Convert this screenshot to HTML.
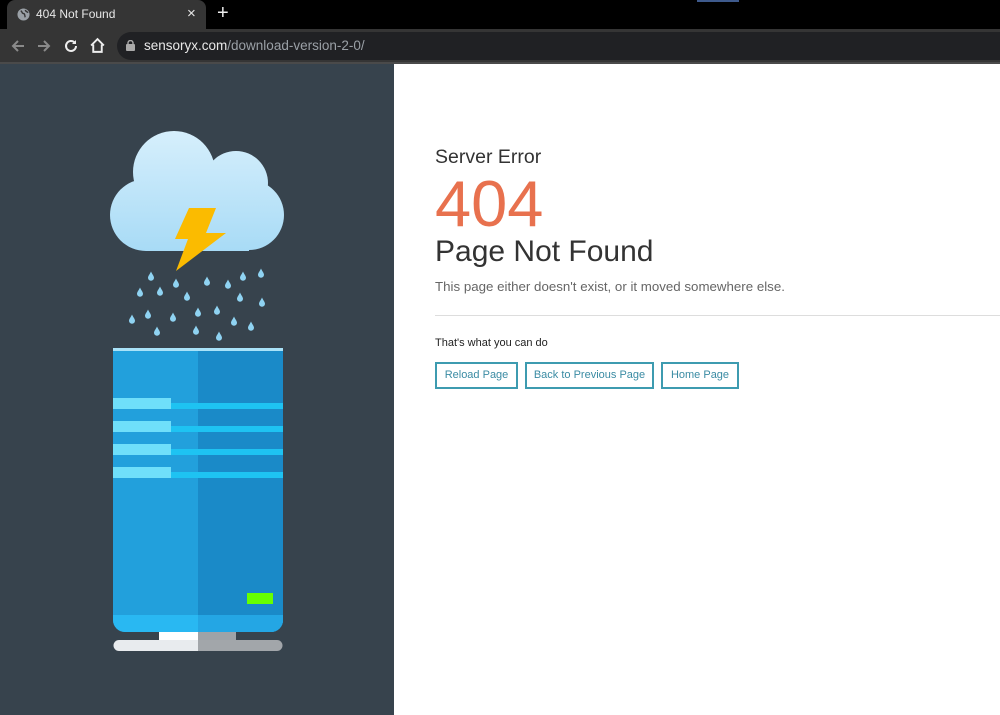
<!DOCTYPE html>
<html><head><meta charset="utf-8"><style>
*{margin:0;padding:0;box-sizing:border-box}
body{width:1000px;height:715px;overflow:hidden;font-family:"Liberation Sans",Arial,sans-serif;background:#fff;position:relative}
.top{position:absolute;left:0;top:0;width:1000px;height:29px;background:#000}
.tab{position:absolute;left:7px;top:0;width:199px;height:29px;background:#353535;border-radius:8px 8px 0 0;color:#e8e8e8;font-size:12px}
.bar{position:absolute;left:0;top:29px;width:1000px;height:35px;background:#353535;border-bottom:2px solid #4a4a4a}
.addr{position:absolute;left:117px;top:3px;width:900px;height:28px;background:#202124;border-radius:14px;font-size:13.5px;color:#e8e8e8}
.left{position:absolute;left:0;top:64px;width:394px;height:651px;background:#37434d}
.r{position:absolute;left:435px;color:#333;white-space:nowrap}
.btn{position:absolute;top:362px;height:27px;border:2px solid #3d9bb0;color:#3a8ba3;font-size:11px;line-height:23px;text-align:center}
</style></head><body>
<div class="top">
 <div class="tab">
  <svg style="position:absolute;left:10px;top:8px" width="13" height="13" viewBox="0 0 14 14"><circle cx="7" cy="7" r="6.5" fill="#9aa0a6"/><path d="M4 3c2 1 1 3 3 3s1 3 2 4M9 2c0 2 2 2 3 3" stroke="#353535" stroke-width="1.5" fill="none"/></svg>
  <span style="position:absolute;left:29px;top:7px">404 Not Found</span>
  <span style="position:absolute;left:180px;top:5px;font-size:15px">×</span>
 </div>
 <span style="position:absolute;left:217px;top:2px;color:#eee;font-size:20px">+</span>
 <div style="position:absolute;left:697px;top:0;width:42px;height:2px;background:#3e5a8c"></div>
</div>
<div class="bar">
 <svg style="position:absolute;left:10px;top:9px" width="16" height="16" viewBox="0 0 16 16"><path d="M14 8H3M8 3L3 8l5 5" stroke="#8a8a8a" stroke-width="2" fill="none"/></svg>
 <svg style="position:absolute;left:36px;top:9px" width="16" height="16" viewBox="0 0 16 16"><path d="M2 8h11M8 3l5 5-5 5" stroke="#8a8a8a" stroke-width="2" fill="none"/></svg>
 <svg style="position:absolute;left:63px;top:9px" width="16" height="16" viewBox="0 0 16 16"><path d="M13 8a5 5 0 1 1-1.5-3.6" stroke="#eee" stroke-width="2" fill="none"/><path d="M13 2v4H9z" fill="#eee"/></svg>
 <svg style="position:absolute;left:89px;top:8px" width="17" height="17" viewBox="0 0 16 16"><path d="M2 8L8 2l6 6M4 7v7h8V7" stroke="#eee" stroke-width="1.8" fill="none"/></svg>
 <div class="addr">
  <svg style="position:absolute;left:9px;top:8px" width="9" height="11" viewBox="0 0 9 11"><rect x="0" y="4" width="9" height="7" rx="1" fill="#aaa"/><path d="M2 5V3a2.5 2.5 0 0 1 5 0v2" stroke="#aaa" stroke-width="1.4" fill="none"/></svg>
  <span style="position:absolute;left:27px;top:6px">sensoryx.com<span style="color:#9aa0a6">/download-version-2-0/</span></span>
 </div>
</div>
<div class="left">
<svg width="394" height="651" viewBox="0 64 394 651" style="position:absolute;left:0;top:0">
 <defs>
  <linearGradient id="c" gradientUnits="userSpaceOnUse" x1="0" y1="131" x2="0" y2="251"><stop offset="0" stop-color="#d6effc"/><stop offset="1" stop-color="#a8dbf6"/></linearGradient>
  <path id="d" d="M0 -4.5C1 -2 3 0 3 1.8a3 3 0 0 1-6 0C-3 0-1-2 0-4.5z" fill="#8fd3f2"/>
 </defs>
 <g fill="url(#c)">
  <circle cx="174" cy="172" r="41"/><circle cx="236" cy="183" r="32"/><circle cx="146" cy="215" r="36"/><circle cx="249" cy="215" r="35"/>
  <rect x="146" y="190" width="103" height="61"/>
 </g>
 <path d="M189 208h27l-10 25h20l-50 38 12-32h-13z" fill="#fbbb00"/>
 <g>
  <use href="#d" x="151" y="276"/><use href="#d" x="176" y="283"/><use href="#d" x="207" y="281"/><use href="#d" x="228" y="284"/><use href="#d" x="243" y="276"/><use href="#d" x="261" y="273"/>
  <use href="#d" x="140" y="292"/><use href="#d" x="160" y="291"/><use href="#d" x="187" y="296"/><use href="#d" x="240" y="297"/><use href="#d" x="262" y="302"/>
  <use href="#d" x="148" y="314"/><use href="#d" x="173" y="317"/><use href="#d" x="198" y="312"/><use href="#d" x="217" y="310"/><use href="#d" x="234" y="321"/>
  <use href="#d" x="132" y="319"/><use href="#d" x="157" y="331"/><use href="#d" x="196" y="330"/><use href="#d" x="219" y="336"/><use href="#d" x="251" y="326"/>
 </g>
 <rect x="113" y="348" width="170" height="284" rx="12" fill="#22a0dc"/>
 <rect x="113" y="348" width="170" height="14" fill="#22a0dc"/>
 <path d="M198 348h85v272a12 12 0 0 1-12 12h-73z" fill="#1a8ac8"/>
 <rect x="113" y="348" width="170" height="3" fill="#a9e2f8"/>
 <path d="M113 615h170v5a12 12 0 0 1-12 12H125a12 12 0 0 1-12-12z" fill="#29b8f2"/>
 <path d="M198 615h85v5a12 12 0 0 1-12 12h-73z" fill="#24a6e4"/>
 <g>
  <rect x="113" y="398" width="58" height="11" fill="#6fdffa"/><rect x="171" y="403" width="112" height="6" fill="#1ec3f2"/>
  <rect x="113" y="421" width="58" height="11" fill="#6fdffa"/><rect x="171" y="426" width="112" height="6" fill="#1ec3f2"/>
  <rect x="113" y="444" width="58" height="11" fill="#6fdffa"/><rect x="171" y="449" width="112" height="6" fill="#1ec3f2"/>
  <rect x="113" y="467" width="58" height="11" fill="#6fdffa"/><rect x="171" y="472" width="112" height="6" fill="#1ec3f2"/>
 </g>
 <rect x="247" y="593" width="26" height="11" fill="#66ff00"/>
 <rect x="159" y="632" width="39" height="9" fill="#fff"/><rect x="198" y="632" width="38" height="9" fill="#9ea3a8"/>
 <path d="M119 640h79v11h-79a5.5 5.5 0 0 1 0-11z" fill="#e8ebee"/>
 <path d="M198 640h79a5.5 5.5 0 0 1 0 11h-79z" fill="#a2a6aa"/>
</svg>
</div>
<div class="r" style="top:146px;font-size:19.5px">Server Error</div>
<div class="r" style="top:168px;font-size:65px;color:#e8714e;line-height:72px">404</div>
<div class="r" style="top:235px;font-size:30px">Page Not Found</div>
<div class="r" style="top:279px;font-size:13.3px;color:#666">This page either doesn't exist, or it moved somewhere else.</div>
<div style="position:absolute;left:435px;top:315px;width:565px;height:1px;background:#ddd"></div>
<div class="r" style="top:337px;font-size:11px;color:#222">That's what you can do</div>
<div class="btn" style="left:435px;width:83px">Reload Page</div>
<div class="btn" style="left:525px;width:129px">Back to Previous Page</div>
<div class="btn" style="left:661px;width:78px">Home Page</div>
</body></html>
